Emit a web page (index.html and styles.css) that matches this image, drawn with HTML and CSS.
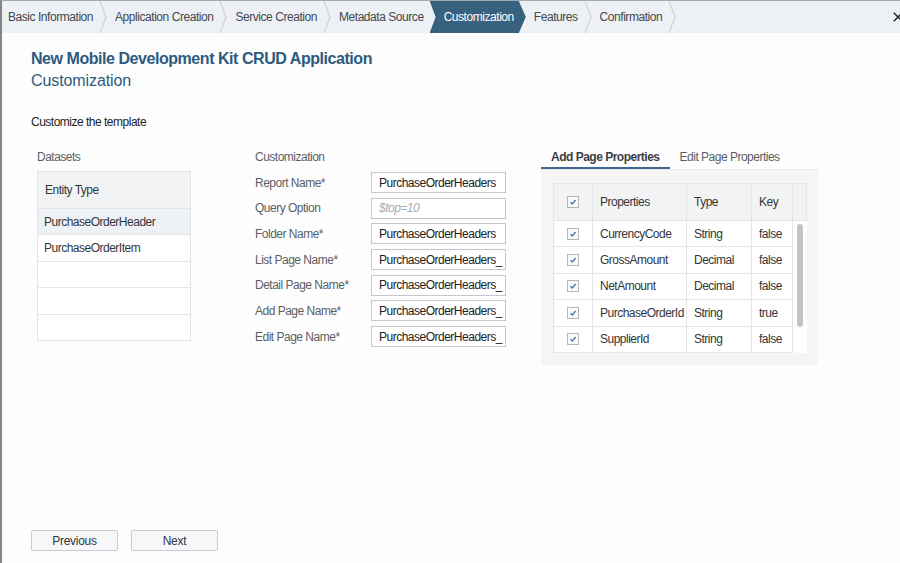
FILE: index.html
```html
<!DOCTYPE html>
<html lang="en">
<head>
<meta charset="utf-8">
<title>New Mobile Development Kit CRUD Application</title>
<link rel="stylesheet" href="styles.css">
</head>
<body>
<div class="app">
  <nav class="steps">
    <span class="step first">Basic Information</span>
    <svg class="sep" viewBox="0 0 8 32" width="8" height="32"><polyline points="1,0 7,16 1,32" /></svg>
    <span class="step">Application Creation</span>
    <svg class="sep" viewBox="0 0 8 32" width="8" height="32"><polyline points="1,0 7,16 1,32" /></svg>
    <span class="step">Service Creation</span>
    <svg class="sep" viewBox="0 0 8 32" width="8" height="32"><polyline points="1,0 7,16 1,32" /></svg>
    <span class="step before-active">Metadata Source</span>
    <span class="step active">Customization</span>
    <span class="step">Features</span>
    <svg class="sep" viewBox="0 0 8 32" width="8" height="32"><polyline points="1,0 7,16 1,32" /></svg>
    <span class="step">Confirmation</span>
    <svg class="sep" viewBox="0 0 8 32" width="8" height="32"><polyline points="1,0 7,16 1,32" /></svg>
    <span class="spacer"></span>
    <svg class="close" viewBox="0 0 7 10" width="7" height="10"><path d="M0.8 0.8 L9.2 9.2 M0.8 9.2 L9.2 0.8" /></svg>
  </nav>

  <main class="content">
    <header class="titles">
      <h1 class="title">New Mobile Development Kit CRUD Application</h1>
      <h2 class="subtitle">Customization</h2>
    </header>
    <p class="intro">Customize the template</p>

    <section class="cols">
      <div class="col datasets">
        <div class="col-label">Datasets</div>
        <div class="ds-table">
          <div class="ds-head">Entity Type</div>
          <div class="ds-row selected">PurchaseOrderHeader</div>
          <div class="ds-row">PurchaseOrderItem</div>
          <div class="ds-row"></div>
          <div class="ds-row"></div>
          <div class="ds-row last"></div>
        </div>
      </div>

      <div class="col custom">
        <div class="col-label">Customization</div>
        <div class="form-grid">
          <span class="f-label">Report Name*</span><span class="f-input">PurchaseOrderHeaders</span>
          <span class="f-label">Query Option</span><span class="f-input placeholder">$top=10</span>
          <span class="f-label">Folder Name*</span><span class="f-input">PurchaseOrderHeaders</span>
          <span class="f-label">List Page Name*</span><span class="f-input">PurchaseOrderHeaders_</span>
          <span class="f-label">Detail Page Name*</span><span class="f-input">PurchaseOrderHeaders_</span>
          <span class="f-label">Add Page Name*</span><span class="f-input">PurchaseOrderHeaders_</span>
          <span class="f-label">Edit Page Name*</span><span class="f-input">PurchaseOrderHeaders_</span>
        </div>
      </div>

      <div class="col props">
        <div class="tabs">
          <span class="tab active">Add Page Properties</span>
          <span class="tab">Edit Page Properties</span>
        </div>
        <div class="panel">
          <div class="ptable">
            <div class="th cb-cell"><span class="cb"><svg viewBox="0 0 10 10" width="10" height="10"><polyline points="2.5,5.2 4.3,7 7.6,3" /></svg></span></div>
            <div class="th">Properties</div>
            <div class="th">Type</div>
            <div class="th">Key</div>
            <div class="th scroll-head"></div>

            <div class="td cb-cell"><span class="cb"><svg viewBox="0 0 10 10" width="10" height="10"><polyline points="2.5,5.2 4.3,7 7.6,3" /></svg></span></div>
            <div class="td">CurrencyCode</div>
            <div class="td">String</div>
            <div class="td">false</div>
            <div class="scroll-track"><span class="thumb"></span></div>

            <div class="td cb-cell"><span class="cb"><svg viewBox="0 0 10 10" width="10" height="10"><polyline points="2.5,5.2 4.3,7 7.6,3" /></svg></span></div>
            <div class="td">GrossAmount</div>
            <div class="td">Decimal</div>
            <div class="td">false</div>

            <div class="td cb-cell"><span class="cb"><svg viewBox="0 0 10 10" width="10" height="10"><polyline points="2.5,5.2 4.3,7 7.6,3" /></svg></span></div>
            <div class="td">NetAmount</div>
            <div class="td">Decimal</div>
            <div class="td">false</div>

            <div class="td cb-cell"><span class="cb"><svg viewBox="0 0 10 10" width="10" height="10"><polyline points="2.5,5.2 4.3,7 7.6,3" /></svg></span></div>
            <div class="td">PurchaseOrderId</div>
            <div class="td">String</div>
            <div class="td">true</div>

            <div class="td cb-cell"><span class="cb"><svg viewBox="0 0 10 10" width="10" height="10"><polyline points="2.5,5.2 4.3,7 7.6,3" /></svg></span></div>
            <div class="td">SupplierId</div>
            <div class="td">String</div>
            <div class="td">false</div>
          </div>
        </div>
      </div>
    </section>

    <footer class="actions">
      <button class="btn" type="button">Previous</button>
      <button class="btn" type="button">Next</button>
    </footer>
  </main>
</div>
</body>
</html>
```

FILE: styles.css
```css
* { box-sizing: border-box; }

html, body {
  margin: 0;
  padding: 0;
  height: 100%;
  background: #fdfdfd;
}

body {
  font-family: "Liberation Sans", Arial, sans-serif;
  font-size: 12px;
  letter-spacing: -0.5px;
  color: #32363a;
  overflow: hidden;
}

.app {
  height: 563px;
  display: flex;
  flex-direction: column;
  border-left: 2px solid #858585;
  border-top: 1px solid #a9a9a9;
}

/* ---------- step bar ---------- */
.steps {
  height: 32px;
  flex: none;
  display: flex;
  align-items: stretch;
  background: #edf0f4;
  color: #43484d;
  white-space: nowrap;
  letter-spacing: -0.45px;
}

.step {
  display: flex;
  align-items: center;
  padding: 0 6px 0 8px;
}

.step.first { padding-left: 6px; }
.step.before-active { padding-right: 6px; }

.sep {
  flex: none;
  display: block;
}
.sep polyline {
  fill: none;
  stroke: #c6cbd1;
  stroke-width: 1;
}

.step.active {
  background: #37617f;
  color: #ffffff;
  padding: 0 12px 0 14px;
  clip-path: polygon(0 0, calc(100% - 7px) 0, 100% 50%, calc(100% - 7px) 100%, 0 100%, 6px 50%);
}

.spacer { flex: 1; }

.close {
  flex: none;
  align-self: center;
  overflow: hidden;
}
.close path {
  fill: none;
  stroke: #222;
  stroke-width: 1.5;
}

/* ---------- content ---------- */
.content {
  flex: 1;
  display: flex;
  flex-direction: column;
  padding: 15px 0 12px 29px;
}

.titles { margin: 0; }

.title {
  margin: 0;
  font-size: 16px;
  line-height: 22px;
  font-weight: bold;
  letter-spacing: -0.45px;
  color: #2d5a7e;
}

.subtitle {
  margin: 0;
  font-size: 16px;
  line-height: 22px;
  font-weight: normal;
  letter-spacing: -0.1px;
  color: #2d5a7e;
}

.intro {
  margin: 22px 0 0;
  line-height: 16px;
  color: #1e1e1e;
}

.cols {
  display: flex;
  align-items: flex-start;
  margin-top: 19px;
}

.col-label {
  height: 22px;
  line-height: 16px;
  color: #5b5f64;
}

/* datasets */
.datasets {
  width: 154px;
  margin-left: 6px;
}

.ds-table {
  border: 1px solid #e3e5e8;
  border-bottom: none;
  background: #fff;
}

.ds-head {
  height: 37px;
  display: flex;
  align-items: center;
  padding-left: 7px;
  background: #f2f3f4;
  border-bottom: 1px solid #e3e5e8;
}

.ds-row {
  height: 26.4px;
  display: flex;
  align-items: center;
  padding-left: 6px;
  border-bottom: 1px solid #e3e5e8;
}

.ds-row.selected { background: #eef1f6; }

/* customization form */
.custom {
  width: 251px;
  margin-left: 64px;
}

.form-grid {
  margin-top: 1px;
  display: grid;
  grid-template-columns: 116px 135px;
  grid-auto-rows: 21px;
  row-gap: 4.7px;
  align-items: center;
}

.f-label { color: #5b5f64; }

.f-input {
  height: 21px;
  display: flex;
  align-items: center;
  padding-left: 7px;
  border: 1px solid #c4c7cb;
  background: #fff;
  color: #222;
  white-space: nowrap;
  overflow: hidden;
}

.f-input.placeholder {
  color: #a7a9ac;
  font-style: italic;
}

/* properties */
.props {
  width: 277px;
  margin-left: 35px;
}

.tabs {
  height: 21px;
  display: flex;
  align-items: flex-start;
  border-bottom: 1px solid #e6e8eb;
}

.tab {
  height: 20px;
  line-height: 16px;
  padding: 0 10px;
  color: #5b5f64;
}

.tab.active {
  font-weight: bold;
  color: #3b4046;
  border-bottom: 2px solid #3d6890;
}

.panel {
  height: 195px;
  background: #f5f5f6;
  padding: 13px 0 0 12px;
}

.ptable {
  width: 253px;
  display: grid;
  grid-template-columns: 39px 94px 65px 41px 14px;
  grid-template-rows: 37px repeat(5, 26.4px);
  border-top: 1px solid #e3e5e8;
  border-left: 1px solid #e3e5e8;
  background: #fff;
}

.th, .td {
  display: flex;
  align-items: center;
  padding-left: 7px;
  border-right: 1px solid #e3e5e8;
  border-bottom: 1px solid #e3e5e8;
  white-space: nowrap;
  overflow: hidden;
  color: #32363a;
}

.th { background: #f2f3f4; }

.cb-cell {
  justify-content: center;
  padding-left: 0;
}

.cb {
  width: 12px;
  height: 12px;
  border: 1px solid #b4b8bd;
  background: #fafafa;
  display: flex;
  align-items: center;
  justify-content: center;
}
.cb polyline {
  fill: none;
  stroke: #4a78a6;
  stroke-width: 1.3;
}

.scroll-head { padding: 0; }

.scroll-track {
  grid-column: 5;
  grid-row: 2 / span 5;
  display: flex;
  justify-content: center;
  padding-top: 3px;
  background: #fff;
}

.thumb {
  width: 6px;
  height: 103px;
  border-radius: 3px;
  background: #c2c4c7;
}

/* footer */
.actions {
  margin-top: auto;
  display: flex;
  gap: 13px;
}

.btn {
  width: 87px;
  height: 21px;
  padding: 0;
  font-family: "Liberation Sans", Arial, sans-serif;
  font-size: 12px;
  letter-spacing: -0.3px;
  color: #32363a;
  background: #f7f7f9;
  border: 1px solid #c9ccd0;
  border-radius: 2px;
}
```
